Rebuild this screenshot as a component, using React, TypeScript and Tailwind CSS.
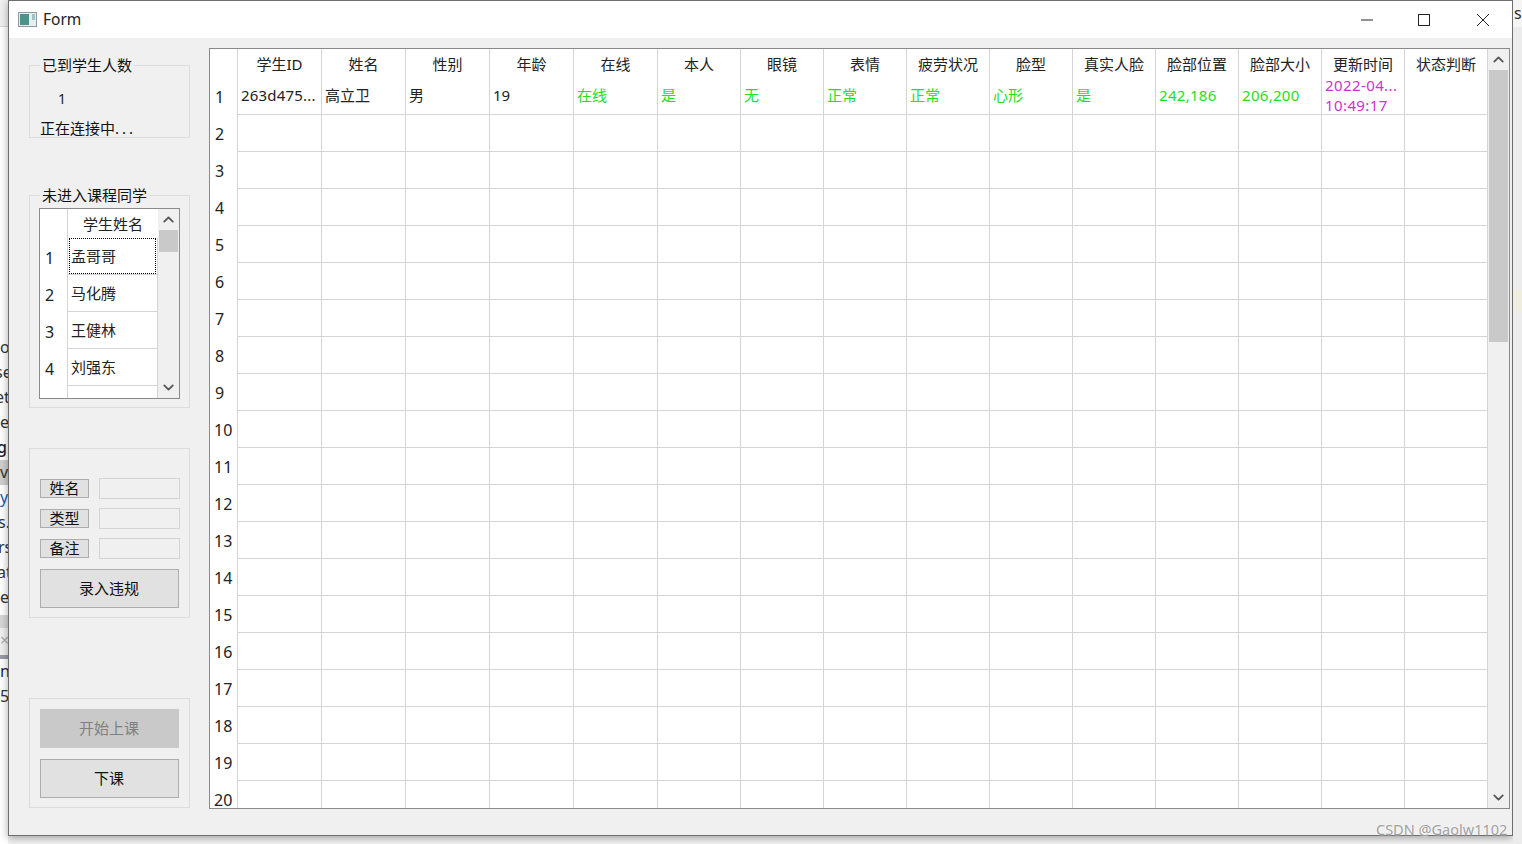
import { ChevronDown, ChevronUp } from 'lucide-react'

const cjk = "font-['Noto_Sans','Noto_Sans_CJK_SC',sans-serif]"

const columns = [
  { title: '学生ID', width: 'w-[84px]' },
  { title: '姓名', width: 'w-[84px]' },
  { title: '性别', width: 'w-[84px]' },
  { title: '年龄', width: 'w-[84px]' },
  { title: '在线', width: 'w-[84px]' },
  { title: '本人', width: 'w-[83px]' },
  { title: '眼镜', width: 'w-[83px]' },
  { title: '表情', width: 'w-[83px]' },
  { title: '疲劳状况', width: 'w-[83px]' },
  { title: '脸型', width: 'w-[83px]' },
  { title: '真实人脸', width: 'w-[83px]' },
  { title: '脸部位置', width: 'w-[83px]' },
  { title: '脸部大小', width: 'w-[83px]' },
  { title: '更新时间', width: 'w-[83px]' },
  { title: '状态判断', width: 'w-[83px]' },
]

const firstRow = [
  { text: '263d475...', cls: 'pb-[3px] tracking-[0.2px] text-[#222222]' },
  { text: '高立卫', cls: 'pb-[3px] text-[#222222]' },
  { text: '男', cls: 'pb-[3px] text-[#222222]' },
  { text: '19', cls: 'pb-[3px] text-[#222222]' },
  { text: '在线', cls: 'pb-[3px] text-[#22e022]' },
  { text: '是', cls: 'pb-[3px] text-[#22e022]' },
  { text: '无', cls: 'pb-[3px] text-[#22e022]' },
  { text: '正常', cls: 'pb-[3px] text-[#22e022]' },
  { text: '正常', cls: 'pb-[3px] text-[#22e022]' },
  { text: '心形', cls: 'pb-[3px] text-[#22e022]' },
  { text: '是', cls: 'pb-[3px] text-[#22e022]' },
  { text: '242,186', cls: 'pb-[3px] tracking-[0.3px] text-[#22e022]' },
  { text: '206,200', cls: 'pb-[3px] tracking-[0.3px] text-[#22e022]' },
  { text: '2022-04...\n10:49:17', cls: 'pb-[3px] tracking-[0.4px] text-[#d030d0]' },
  { text: '', cls: '' },
]

const rows = Array.from({ length: 20 }, (_, i) => i + 1)

const students = ['孟哥哥', '马化腾', '王健林', '刘强东']

const leftStrip = [
  { text: 'o', cls: 'bg-white text-[#333333]' },
  { text: 'se', cls: '-ml-[5px] bg-white text-[#333333]' },
  { text: 'et', cls: '-ml-[5px] bg-white text-[#333333]' },
  { text: 'e', cls: 'bg-white text-[#333333]' },
  { text: 'gi', cls: '-ml-[3px] bg-white font-medium text-[#222222]' },
  { text: 'v', cls: 'bg-[#cfcfcf] text-[#333333]' },
  { text: 'y', cls: 'bg-white text-[#1a5fb4]' },
  { text: 's.', cls: '-ml-[2px] bg-white text-[#333333]' },
  { text: 'rs', cls: '-ml-[2px] bg-white text-[#333333]' },
  { text: 'at', cls: '-ml-[3px] bg-white text-[#333333]' },
  { text: 'e', cls: 'bg-white text-[#333333]' },
]

function Scrollbar({ className, thumbHeight }: { className: string; thumbHeight: string }) {
  return (
    <div className={`flex shrink-0 flex-col bg-[#f0f0f0] ${className}`}>
      <div className="flex h-[21px] shrink-0 items-center justify-center">
        <ChevronUp size={17} strokeWidth={2.5} className="text-[#555555]" />
      </div>
      <div className={`ml-[1px] w-[19px] bg-[#c9c9c9] ${thumbHeight}`} />
      <div className="flex-1" />
      <div className="flex h-[21px] shrink-0 items-center justify-center">
        <ChevronDown size={17} strokeWidth={2.5} className="text-[#555555]" />
      </div>
    </div>
  )
}

function GroupBox({ title, className, children }: { title?: string; className: string; children: React.ReactNode }) {
  return (
    <div className={`w-[161px] border border-[#dcdcdc] ${className}`}>
      {title && (
        <div className="ml-[10px] -mt-[11px] h-[20px] w-fit bg-[#f0f0f0] px-[2px] text-[15px] leading-[20px] text-[#111111]">
          {title}
        </div>
      )}
      {children}
    </div>
  )
}

function FieldRow({ label }: { label: string }) {
  return (
    <div className="flex h-[21px] items-center">
      <div className="flex h-[19px] w-[49px] shrink-0 items-center justify-center border border-[#adadad] bg-[#e1e1e1] pb-[1px] text-[15px] leading-none text-[#111111]">
        {label}
      </div>
      <div className="ml-[10px] h-[21px] w-[81px] shrink-0 border border-[#d4d4d4] bg-[#f0f0f0]" />
    </div>
  )
}

function StudentsTable() {
  return (
    <div className="ml-[9px] mt-[3px] flex h-[191px] w-[141px] overflow-hidden border border-[#8a8a8a] bg-white">
      <div className="w-[118px] shrink-0 overflow-hidden">
        <div className="flex h-[29px]">
          <div className="w-[28px] shrink-0 border-r border-[#d4d4d4]" />
          <div className="flex w-[90px] items-center justify-center pt-[1px] text-[15px] text-[#222222]">学生姓名</div>
        </div>
        {students.map((name, i) => (
          <div key={name} className="flex h-[37px] text-[15px] text-[#222222]">
            <div className="flex w-[28px] shrink-0 items-center border-r border-[#d4d4d4] pl-[5px] pt-[2px] text-[16px]">
              {i + 1}
            </div>
            <div className="flex w-[90px] items-center border-b border-r border-[#d4d4d4] pl-[3px]">
              {i === 0 ? (
                <div className="-ml-[2px] flex h-[36px] w-[87px] items-center border border-dotted border-black pl-[1px]">
                  {name}
                </div>
              ) : (
                name
              )}
            </div>
          </div>
        ))}
        <div className="flex h-[14px]">
          <div className="w-[28px] shrink-0 border-r border-[#d4d4d4]" />
          <div className="w-[90px] border-r border-[#d4d4d4]" />
        </div>
      </div>
      <Scrollbar className="w-[21px]" thumbHeight="h-[22px]" />
    </div>
  )
}

function MainTable() {
  return (
    <div className="mt-[10px] flex h-[761px] w-[1301px] overflow-hidden border border-[#8a8a8a] bg-white text-[15px]">
      <div className="w-[1278px] shrink-0 overflow-hidden">
        <div className="flex h-[30px]">
          <div className="w-[28px] shrink-0 border-r border-[#d4d4d4]" />
          {columns.map(col => (
            <div
              key={col.title}
              className={`flex shrink-0 items-center justify-center border-r border-[#d4d4d4] text-[#222222] ${col.width}`}
            >
              {col.title}
            </div>
          ))}
        </div>
        {rows.map(row => (
          <div key={row} className={`flex ${row === 1 ? 'h-[36px]' : 'h-[37px]'}`}>
            <div
              className={`flex w-[28px] shrink-0 items-center border-r border-[#d4d4d4] text-[16px] text-[#222222] ${row === 1 ? 'pb-[1px]' : ''} ${row < 10 ? 'pl-[5px]' : 'pl-[4px]'}`}
            >
              {row}
            </div>
            {columns.map((col, i) => (
              <div
                key={col.title}
                className={`flex shrink-0 items-center whitespace-pre-line border-b border-r border-[#d4d4d4] pl-[3px] leading-[20px] ${col.width} ${row === 1 ? firstRow[i].cls : ''}`}
              >
                {row === 1 ? firstRow[i].text : ''}
              </div>
            ))}
          </div>
        ))}
      </div>
      <Scrollbar className="w-[21px]" thumbHeight="h-[272px]" />
    </div>
  )
}

export default function App() {
  return (
    <div className={`relative flex h-[844px] w-[1522px] overflow-hidden bg-[#f3f3f3] ${cjk}`}>
      {/* desktop peeking out on the left of the window */}
      <div className="flex w-[8px] shrink-0 flex-col overflow-hidden text-[16px] leading-[25px]">
        <div className="h-[27px] border-b border-[#d8d8d8] bg-[#f0f0f0]" />
        <div className="h-[308px] bg-white" />
        {leftStrip.map((line, i) => (
          <div key={i} className={`h-[25px] whitespace-nowrap ${line.cls}`}>
            {line.text}
          </div>
        ))}
        <div className="h-[5px] bg-white" />
        <div className="h-[13px] bg-[#d6d6d6]" />
        <div className="h-[27px] bg-[#f0f0f0] text-[#aaaaaa]">×</div>
        <div className="h-[4px] bg-[#9a9aa8]" />
        <div className="h-[25px] bg-white text-[#222266]">n</div>
        <div className="h-[25px] bg-white text-[#333333]">5</div>
        <div className="flex-1 bg-white" />
      </div>

      {/* window */}
      <div className="h-[836px] w-[1505px] shrink-0 border border-[#6e6e6e] bg-[#f0f0f0] shadow-[0_2px_8px_rgba(0,0,0,0.35)]">
        <div className="flex h-[37px] items-center bg-white">
          <svg width="20" height="16" viewBox="0 0 20 16" className="ml-[9px]">
            <rect x="0.5" y="0.5" width="18" height="14" fill="#e8eef0" stroke="#8a9aa0" />
            <rect x="2" y="2" width="9" height="11" fill="#4f9088" />
            <rect x="14" y="2" width="3" height="6" fill="#9cc4c0" />
          </svg>
          <span className="ml-[5px] text-[15.5px] text-[#222222]">Form</span>
          <div className="ml-auto flex h-full items-center">
            <svg width="14" height="14" viewBox="0 0 14 14">
              <path d="M1 7h12" stroke="#222222" strokeWidth="1" />
            </svg>
            <svg width="14" height="14" viewBox="0 0 14 14" className="ml-[43px]">
              <rect x="1.5" y="1.5" width="11" height="11" fill="none" stroke="#222222" />
            </svg>
            <svg width="14" height="14" viewBox="0 0 14 14" className="ml-[45px] mr-[22px]">
              <path d="M1 1l12 12M13 1L1 13" stroke="#222222" strokeWidth="1" />
            </svg>
          </div>
        </div>

        <div className="flex">
          <div className="w-[200px] shrink-0 pl-[20px]">
            <GroupBox title="已到学生人数" className="mt-[27px] h-[73px]">
              <div className="ml-[28px] mt-[14px] h-[20px] text-[14px] leading-[20px] text-[#222222]">1</div>
              <div className="ml-[10px] mt-[9px] text-[15px] leading-[20px] text-[#111111]">
                正在连接中<span className="tracking-[3px]">...</span>
              </div>
            </GroupBox>
            <GroupBox title="未进入课程同学" className="mt-[57px] h-[213px]">
              <StudentsTable />
            </GroupBox>
            <GroupBox className="mt-[40px] flex h-[170px] flex-col px-[10px] pt-[29px]">
              <div className="flex flex-col gap-[9px]">
                <FieldRow label="姓名" />
                <FieldRow label="类型" />
                <FieldRow label="备注" />
              </div>
              <button className="mt-[10px] h-[39px] w-[139px] border border-[#adadad] bg-[#e1e1e1] pr-[1px] text-[15px] text-[#111111]">
                录入违规
              </button>
            </GroupBox>
            <GroupBox className="mt-[80px] flex h-[110px] flex-col gap-[11px] px-[10px] pt-[10px]">
              <button disabled className="h-[39px] w-[139px] bg-[#c9c9c9] pb-[1px] pr-[1px] text-[15px] text-[#808080]">
                开始上课
              </button>
              <button className="h-[39px] w-[139px] border border-[#adadad] bg-[#e1e1e1] pb-[1px] pr-[1px] text-[15px] text-[#111111]">
                下课
              </button>
            </GroupBox>
          </div>
          <MainTable />
        </div>
      </div>

      {/* desktop peeking out on the right */}
      <div className="flex flex-1 flex-col overflow-hidden">
        <div className="h-[27px] bg-[#f5f5f5] pl-[1px] text-[16px] leading-[26px] text-[#333333]">s</div>
        <div className="h-[263px] bg-[#ececec]" />
        <div className="h-[22px] bg-[#efedde]" />
        <div className="flex-1 bg-[#ececec]" />
      </div>

      {/* watermark */}
      <div className="absolute left-[1376px] top-[820px] text-[14.5px] leading-[18px] text-[#a0a0a0] [text-shadow:0_0_2px_#ffffff]">
        CSDN @Gaolw1102
      </div>
    </div>
  )
}
